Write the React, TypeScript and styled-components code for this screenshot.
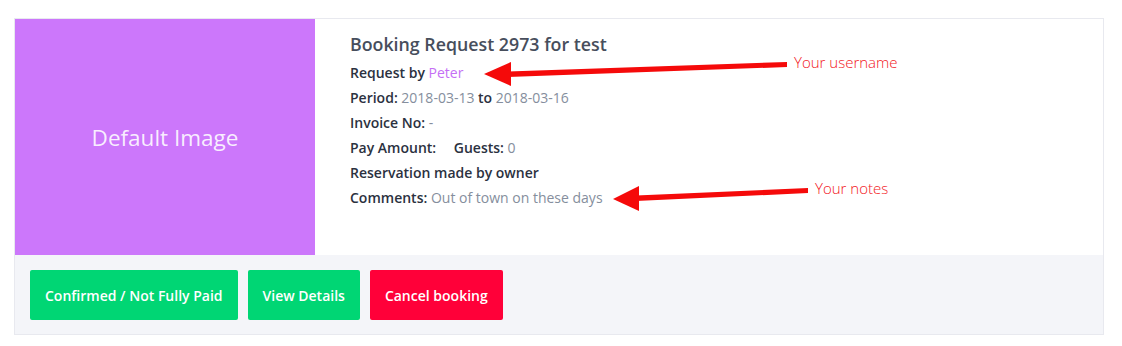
import React from 'react';
import styled, { createGlobalStyle } from 'styled-components';

const GlobalStyle = createGlobalStyle`
  body {
    margin: 0;
    background: #ffffff;
    font-family: "Open Sans", Lato, sans-serif;
  }
`;

const Page = styled.div`
  position: relative;
  width: 1122px;
  height: 346px;
  padding: 18px 0 0 14px;
  box-sizing: border-box;
`;

const Card = styled.div`
  width: 1090px;
  border: 1px solid #e8e9ef;
  box-sizing: border-box;
  background: #ffffff;
`;

const Body = styled.div`
  display: flex;
  height: 236px;
`;

const Thumb = styled.div`
  width: 300px;
  flex-shrink: 0;
  background: #cc77fb;
  display: flex;
  align-items: center;
  justify-content: center;
  color: rgba(255, 255, 255, 0.88);
  font-size: 22.5px;
  font-weight: 500;
`;

const Info = styled.div`
  padding: 13px 0 0 35px;
  display: flex;
  flex-direction: column;
`;

const Title = styled.h3`
  margin: 0 0 4px;
  font-size: 17.8px;
  font-weight: 600;
  color: #474e5c;
  line-height: 24px;
`;

const Line = styled.div`
  font-size: 14px;
  line-height: 25px;
  font-weight: 600;
  color: #2b3140;
`;

const Value = styled.span<{ $accent?: boolean }>`
  font-weight: 400;
  color: ${p => (p.$accent ? '#c56ff5' : '#858e9d')};
`;

const Spaced = styled.span`
  margin-left: 14px;
`;

const Footer = styled.div`
  display: flex;
  gap: 10px;
  padding: 15px 15px 14px;
  background: #f4f5f9;
`;

const Button = styled.button<{ $danger?: boolean }>`
  height: 50px;
  padding: 0 15px;
  border: none;
  border-radius: 2px;
  background: ${p => (p.$danger ? '#ff0039' : '#00d674')};
  color: #ffffff;
  font-family: inherit;
  font-size: 14px;
  font-weight: 600;
`;

const Overlay = styled.svg`
  position: absolute;
  left: 0;
  top: 0;
  pointer-events: none;
`;

const NoteText = styled.text`
  font-family: "Open Sans", sans-serif;
  font-size: 15px;
  font-weight: 300;
  fill: #f2141a;
`;

const App: React.FC = () => (
  <Page>
    <GlobalStyle />
    <Card>
      <Body>
        <Thumb>Default Image</Thumb>
        <Info>
          <Title>Booking Request 2973 for test</Title>
          <Line>
            Request by <Value $accent>Peter</Value>
          </Line>
          <Line>
            Period: <Value>2018-03-13</Value> to <Value>2018-03-16</Value>
          </Line>
          <Line>
            Invoice No: <Value>-</Value>
          </Line>
          <Line>
            Pay Amount: <Spaced>Guests:</Spaced> <Value>0</Value>
          </Line>
          <Line>Reservation made by owner</Line>
          <Line>
            Comments: <Value>Out of town on these days</Value>
          </Line>
        </Info>
      </Body>
      <Footer>
        <Button>Confirmed / Not Fully Paid</Button>
        <Button>View Details</Button>
        <Button $danger>Cancel booking</Button>
      </Footer>
    </Card>
    <Overlay width="1122" height="346">
      <path d="M508 71.5 L787 62 L787 67 L508 77 Z" fill="#f50a0a" />
      <path d="M484 74 L511 62 L511 86 Z" fill="#f50a0a" />
      <path d="M636 195.5 L808 188 L808 193 L636 201 Z" fill="#f50a0a" />
      <path d="M613 199 L639 186 L639 211 Z" fill="#f50a0a" />
      <NoteText x="794" y="68">Your username</NoteText>
      <NoteText x="815" y="194">Your notes</NoteText>
    </Overlay>
  </Page>
);

export default App;
